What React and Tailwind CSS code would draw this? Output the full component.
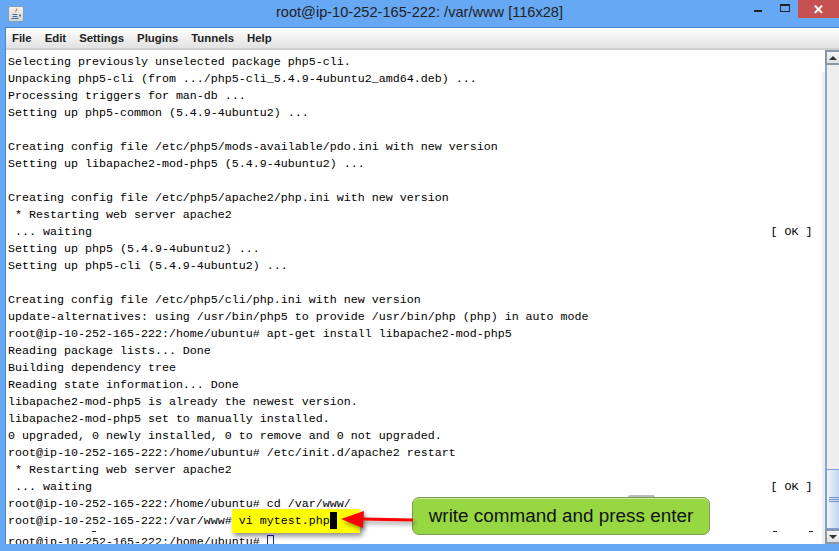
import React from 'react';

const ok = (text) => text.padEnd(109) + '[ OK ]';

const lines = [
  'Selecting previously unselected package php5-cli.',
  'Unpacking php5-cli (from .../php5-cli_5.4.9-4ubuntu2_amd64.deb) ...',
  'Processing triggers for man-db ...',
  'Setting up php5-common (5.4.9-4ubuntu2) ...',
  '',
  'Creating config file /etc/php5/mods-available/pdo.ini with new version',
  'Setting up libapache2-mod-php5 (5.4.9-4ubuntu2) ...',
  '',
  'Creating config file /etc/php5/apache2/php.ini with new version',
  ' * Restarting web server apache2',
  ok(' ... waiting'),
  'Setting up php5 (5.4.9-4ubuntu2) ...',
  'Setting up php5-cli (5.4.9-4ubuntu2) ...',
  '',
  'Creating config file /etc/php5/cli/php.ini with new version',
  'update-alternatives: using /usr/bin/php5 to provide /usr/bin/php (php) in auto mode',
  'root@ip-10-252-165-222:/home/ubuntu# apt-get install libapache2-mod-php5',
  'Reading package lists... Done',
  'Building dependency tree',
  'Reading state information... Done',
  'libapache2-mod-php5 is already the newest version.',
  'libapache2-mod-php5 set to manually installed.',
  '0 upgraded, 0 newly installed, 0 to remove and 0 not upgraded.',
  'root@ip-10-252-165-222:/home/ubuntu# /etc/init.d/apache2 restart',
  ' * Restarting web server apache2',
  ok(' ... waiting'),
  'root@ip-10-252-165-222:/home/ubuntu# cd /var/www/',
];

const menus = ['File', 'Edit', 'Settings', 'Plugins', 'Tunnels', 'Help'];

function JavaIcon() {
  return (
    <div className="flex h-[16px] w-[16px] items-center justify-center rounded-[2px] border border-[#8a9bb0] bg-gradient-to-b from-[#f2f2f2] to-[#cfd6de]">
      <svg width="12" height="13" viewBox="0 0 12 13">
        <path d="M6.500 0.500c1 2-2.500 3-.8 5.500C5.200 4.200 9 3.500 6.500 0.500z" fill="#e2731c" />
        <path d="M2.500 7h5v1h-5zM2.500 9h5v1h-5zM1.500 11h7v1h-7zM9 7.500h2v2H9.500v-1H9z" fill="#4a6a94" />
      </svg>
    </div>
  );
}

function ScrollButton({ up }) {
  return (
    <div className="flex h-[15px] shrink-0 items-center justify-center border-2 border-r-0 border-[#8b96a6] bg-gradient-to-b from-[#f6f6f6] to-[#e0e0e0]">
      <div
        className={
          up
            ? 'h-0 w-0 border-x-[4px] border-b-[4px] border-x-transparent border-b-[#333]'
            : 'h-0 w-0 border-x-[4px] border-t-[4px] border-x-transparent border-t-[#333]'
        }
      />
    </div>
  );
}

export default function App() {
  return (
    <div className="flex h-[551px] w-[839px] flex-col overflow-hidden bg-[#66a8f4] font-['Liberation_Sans',sans-serif]">
      <div className="relative flex h-[27px] shrink-0 items-center pl-[8px]">
        <JavaIcon />
        <div className="absolute inset-x-0 top-[3px] text-center text-[14.6px] leading-[18px] text-[#222]">root@ip-10-252-165-222: /var/www [116x28]</div>
        <div className="absolute right-0 top-0 flex h-[18px] items-start">
          <div className="mt-[10px] mr-[18px] h-[2px] w-[8px] bg-[#222]" />
          <div className="mt-[4px] mr-[8px] h-[8px] w-[10px] border border-t-[2px] border-[#222]" />
          <div className="flex h-[18px] w-[41px] items-center justify-center bg-[#c75050] text-[13px] font-bold leading-none text-white">✕</div>
        </div>
      </div>
      <div className="mb-[7px] ml-[5px] flex min-h-0 flex-1 flex-col border-t border-l border-[#4a86cc] bg-white">
        <div className="flex h-[22px] shrink-0 items-center gap-[13px] border-b-2 border-[#d0d0d0] bg-gradient-to-b from-white to-[#e2e2e2] pl-[6px] pt-[1px] text-[11.4px] font-bold text-[#222]">
          {menus.map((m) => (
            <span key={m}>{m}</span>
          ))}
        </div>
        <div className="relative flex min-h-0 flex-1">
          <div className="min-w-0 flex-1 overflow-hidden pl-[2px] pt-[4px] font-['Liberation_Mono',monospace] text-[11.667px] leading-[17px] text-black">
            {lines.map((line, i) => (
              <div key={i} className="h-[17px] whitespace-pre">{line}</div>
            ))}
            <div className="h-[17px] whitespace-pre">
              root@ip-10-252-165-222:/var/www#
              <span className="relative isolate inline-block">
                <span className="absolute left-0 top-[-4px] -z-10 h-[24px] w-[128px] bg-[#ffff00] shadow-[2px_3px_5px_rgba(0,0,0,0.45)]" />
                {' vi mytest.php'}
                <span className="absolute left-[98px] top-[-1px] h-[17px] w-[7px] bg-black" />
              </span>
            </div>
            <div className="mt-[4px] h-[17px] whitespace-pre">
              root@ip-10-252-165-222:/home/ubuntu# <span className="inline-block h-[13px] w-[7px] border border-[#2222aa] align-middle" />
            </div>
          </div>
          <div className="mt-[22px] w-[3px] shrink-0 bg-[#eeeeee]" />
          <div className="flex w-[14px] shrink-0 flex-col">
            <ScrollButton up />
            <div className="flex-1 border-l-2 border-[#8fa6c6] bg-[#eeeeee]" />
            <div className="flex h-[60px] shrink-0 flex-col items-center justify-center gap-[1px] border-y border-l-2 border-[#7f9fdc] bg-gradient-to-r from-[#eef4fc] to-[#c3d6ee] pl-[2px]">
              <div className="h-px w-full bg-[#6f8fd0]" />
              <div className="h-px w-full bg-[#6f8fd0]" />
              <div className="h-px w-full bg-[#6f8fd0]" />
            </div>
            <ScrollButton />
          </div>
          {/* stray dashes left behind in the terminal */}
          <div className="absolute bottom-[12px] left-[767px] h-px w-[4px] bg-[#222]" />
          <div className="absolute bottom-[12px] left-[803px] h-px w-[4px] bg-[#222]" />
          <div className="absolute bottom-[12px] left-[86px] h-px w-[4px] bg-[#222]" />
          {/* annotation over the terminal */}
          <div className="absolute bottom-[47px] left-[622px] h-[2px] w-[27px] rounded-t-sm bg-[#bbbbbb]" />
          <div className="absolute bottom-[9px] left-[406px] flex h-[38px] w-[298px] items-center justify-center rounded-[7px] border border-[#7a9a55] bg-[#97d741] text-[18.900px] text-[#111] shadow-[inset_0_1px_0_rgba(255,255,255,0.5)]">
            write command and press enter
          </div>
          <svg className="absolute bottom-[14px] left-[334px] drop-shadow-[2px_3px_2px_rgba(0,0,0,0.4)]" width="74" height="22" viewBox="0 0 74 22">
            <path d="M73 12 L22 11" stroke="#ff0000" strokeWidth="3" />
            <path d="M1 11 L24 3 L23 20 Z" fill="#ff0000" />
          </svg>
        </div>
      </div>
    </div>
  );
}
